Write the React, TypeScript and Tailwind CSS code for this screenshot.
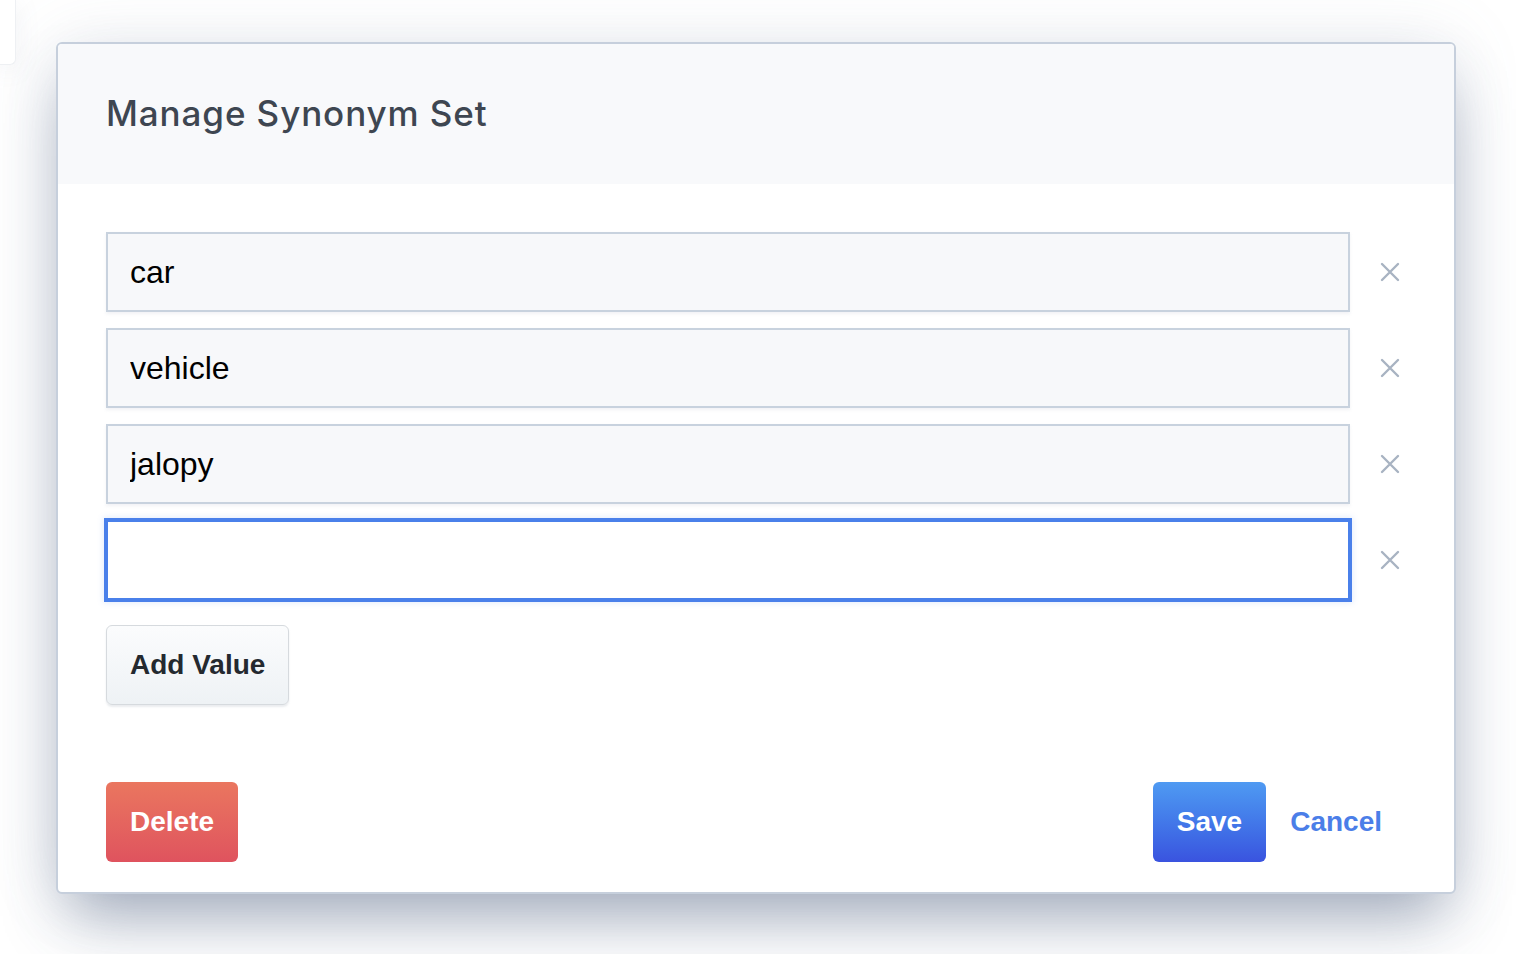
import { useState } from "react";

const initialValues = ["car", "vehicle", "jalopy", ""];

function CloseIcon() {
  return (
    <svg width="20" height="20" viewBox="0 0 20 20" fill="none">
      <path
        d="M2 2 18 18M18 2 2 18"
        stroke="#a8b3c2"
        strokeWidth="2.4"
        strokeLinecap="round"
      />
    </svg>
  );
}

export default function App() {
  const [values, setValues] = useState<string[]>(initialValues);

  return (
    <div className="relative h-[954px] w-full overflow-hidden bg-white">
      {/* window peeking out behind the modal */}
      <div className="absolute left-0 top-0 h-[65px] w-[16px] rounded-br-md border-b border-r border-[#eef0f3] bg-white shadow-[0_4px_24px_rgba(120,135,160,0.12)]" />

      <div className="pl-[56px] pt-[42px]">
        <div className="w-[1400px] overflow-hidden rounded-md border-2 border-[#c6cfdc] bg-white shadow-[0_34px_60px_-12px_rgba(55,75,110,0.45),0_0_70px_rgba(120,135,160,0.14)]">
          {/* header */}
          <div className="bg-[#f8f9fb] px-12 pb-[49px] pt-12">
            <h1 className="font-['Inter',sans-serif] text-[35px] font-medium leading-[43px] tracking-[0.9px] text-[#3e4651]">
              Manage Synonym Set
            </h1>
          </div>

          {/* values */}
          <div className="px-12 pt-12 font-['Liberation_Sans',Arial,sans-serif]">
            <div className="flex flex-col gap-4">
              {values.map((value, i) => {
                const focused = i === values.length - 1;
                return (
                  <div key={i} className="flex items-center">
                    <input
                      value={value}
                      onChange={(e) => {
                        const next = [...values];
                        next[i] = e.target.value;
                        setValues(next);
                      }}
                      className={`h-20 w-[1244px] border-2 px-[22px] text-[32px] text-black outline-none ${
                        focused
                          ? "border-[#4a80ea] bg-white shadow-[0_0_0_2px_#4a80ea,0_0_6px_3px_rgba(74,128,234,0.15)]"
                          : "border-[#c8d2de] bg-[#f7f8fa] shadow-[0_2px_3px_rgba(160,170,190,0.15)]"
                      }`}
                    />
                    <button className="ml-[30px] flex h-5 w-5 items-center justify-center">
                      <CloseIcon />
                    </button>
                  </div>
                );
              })}
            </div>

            <button className="mt-[25px] h-20 rounded-md border border-[#d6dade] bg-gradient-to-b from-[#fbfcfd] to-[#eef2f5] px-[23px] text-[28px] font-bold text-[#24292f] shadow-[0_2px_2px_rgba(150,160,175,0.2)]">
              Add Value
            </button>
          </div>

          {/* footer */}
          <div className="flex items-center justify-between px-12 pb-[30px] pt-[77px] font-['Liberation_Sans',Arial,sans-serif]">
            <button className="h-20 rounded-md bg-gradient-to-b from-[#ea765f] to-[#df535e] px-6 text-[28px] font-bold text-white">
              Delete
            </button>
            <div className="flex items-center">
              <button className="h-20 rounded-md bg-gradient-to-b from-[#4f9af2] to-[#3a53df] px-6 text-[28px] font-bold text-white">
                Save
              </button>
              <button className="h-20 px-6 text-[28px] font-bold text-[#4b7ee8]">
                Cancel
              </button>
            </div>
          </div>
        </div>
      </div>
    </div>
  );
}
